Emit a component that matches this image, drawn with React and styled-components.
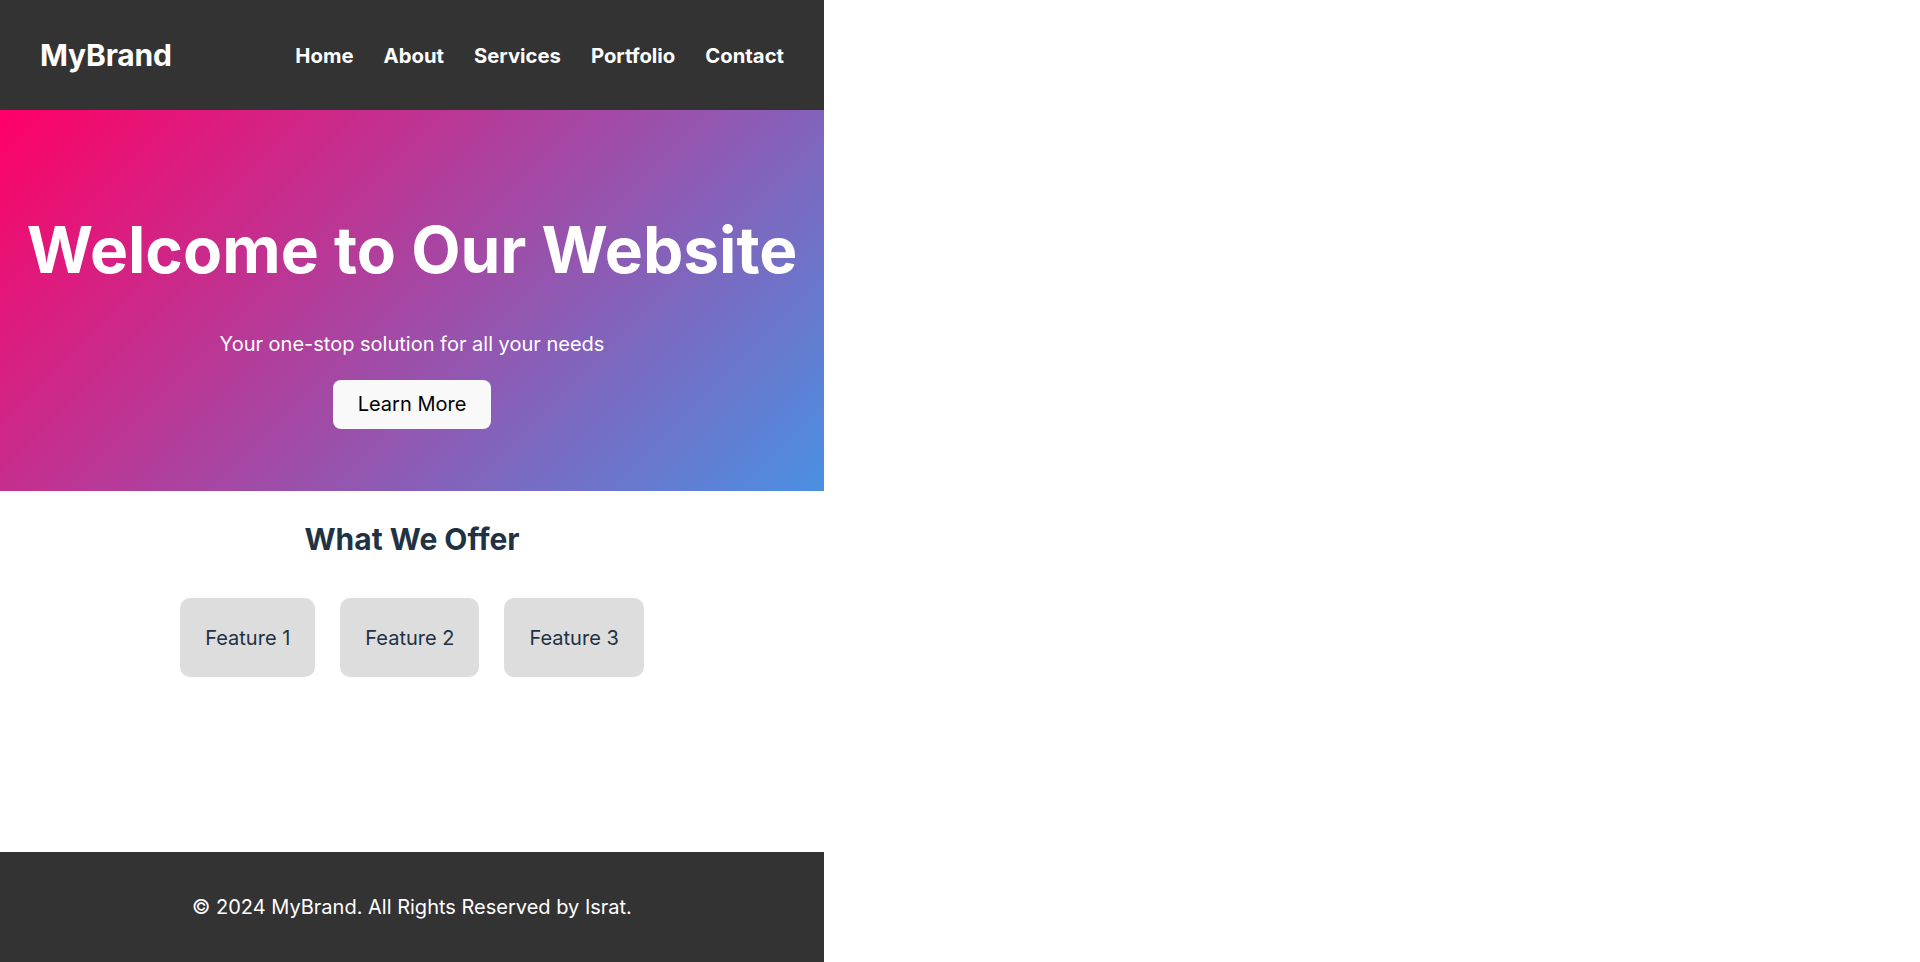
import React from "react";
import styled, { createGlobalStyle } from "styled-components";

const GlobalStyle = createGlobalStyle`
  * { box-sizing: border-box; }
  html, body { margin: 0; padding: 0; background: #ffffff; }
  body { font-family: Inter, "Noto Sans", Arial, sans-serif; }
`;

const Page = styled.div`
  width: 824px;
  min-height: 962px;
  display: flex;
  flex-direction: column;
`;

const Header = styled.header`
  height: 110px;
  background: #333333;
  color: #ffffff;
  display: flex;
  align-items: center;
  justify-content: space-between;
  padding: 0 40px;
`;

const Brand = styled.div`
  font-size: 30px;
  font-weight: 700;
  letter-spacing: -0.2px;
`;

const Nav = styled.nav`
  display: flex;
  gap: 30px;
`;

const NavLink = styled.a`
  color: #ffffff;
  text-decoration: none;
  font-size: 20.3px;
  font-weight: 700;
`;

const Hero = styled.section`
  height: 381px;
  background: linear-gradient(135deg, #ff0066, #4a90e2);
  color: #ffffff;
  display: flex;
  flex-direction: column;
  align-items: center;
  padding-top: 102px;
  text-align: center;
`;

const Title = styled.h1`
  margin: 0 0 43px;
  font-size: 64px;
  font-weight: 700;
  line-height: 1.2;
`;

const Subtitle = styled.p`
  margin: 0 0 24px;
  font-size: 20px;
  line-height: 1.2;
`;

const Button = styled.button`
  background: #f9f9f9;
  color: #000000;
  border: none;
  border-radius: 8px;
  padding: 0 25px;
  height: 49px;
  font-family: inherit;
  font-size: 20px;
  cursor: pointer;
`;

const Main = styled.main`
  flex: 1;
  display: flex;
  flex-direction: column;
  align-items: center;
  padding-top: 30px;
`;

const SectionTitle = styled.h2`
  margin: 0 0 41px;
  color: #213244;
  font-size: 30px;
  font-weight: 700;
  line-height: 1.2;
`;

const Cards = styled.div`
  display: flex;
  gap: 25px;
`;

const Card = styled.div`
  background: #dddddd;
  border-radius: 10px;
  height: 79px;
  padding: 0 25px;
  display: flex;
  align-items: center;
  color: #213244;
  font-size: 20px;
`;

const Footer = styled.footer`
  height: 110px;
  background: #333333;
  color: #ffffff;
  display: flex;
  align-items: center;
  justify-content: center;
  font-size: 20px;
`;

const links = ["Home", "About", "Services", "Portfolio", "Contact"];
const features = ["Feature 1", "Feature 2", "Feature 3"];

export default function App() {
  return (
    <>
      <GlobalStyle />
      <Page>
        <Header>
          <Brand>MyBrand</Brand>
          <Nav>
            {links.map((l) => (
              <NavLink key={l} href="#">{l}</NavLink>
            ))}
          </Nav>
        </Header>
        <Hero>
          <Title>Welcome to Our Website</Title>
          <Subtitle>Your one-stop solution for all your needs</Subtitle>
          <Button>Learn More</Button>
        </Hero>
        <Main>
          <SectionTitle>What We Offer</SectionTitle>
          <Cards>
            {features.map((f) => (
              <Card key={f}>{f}</Card>
            ))}
          </Cards>
        </Main>
        <Footer>© 2024 MyBrand. All Rights Reserved by Israt.</Footer>
      </Page>
    </>
  );
}
